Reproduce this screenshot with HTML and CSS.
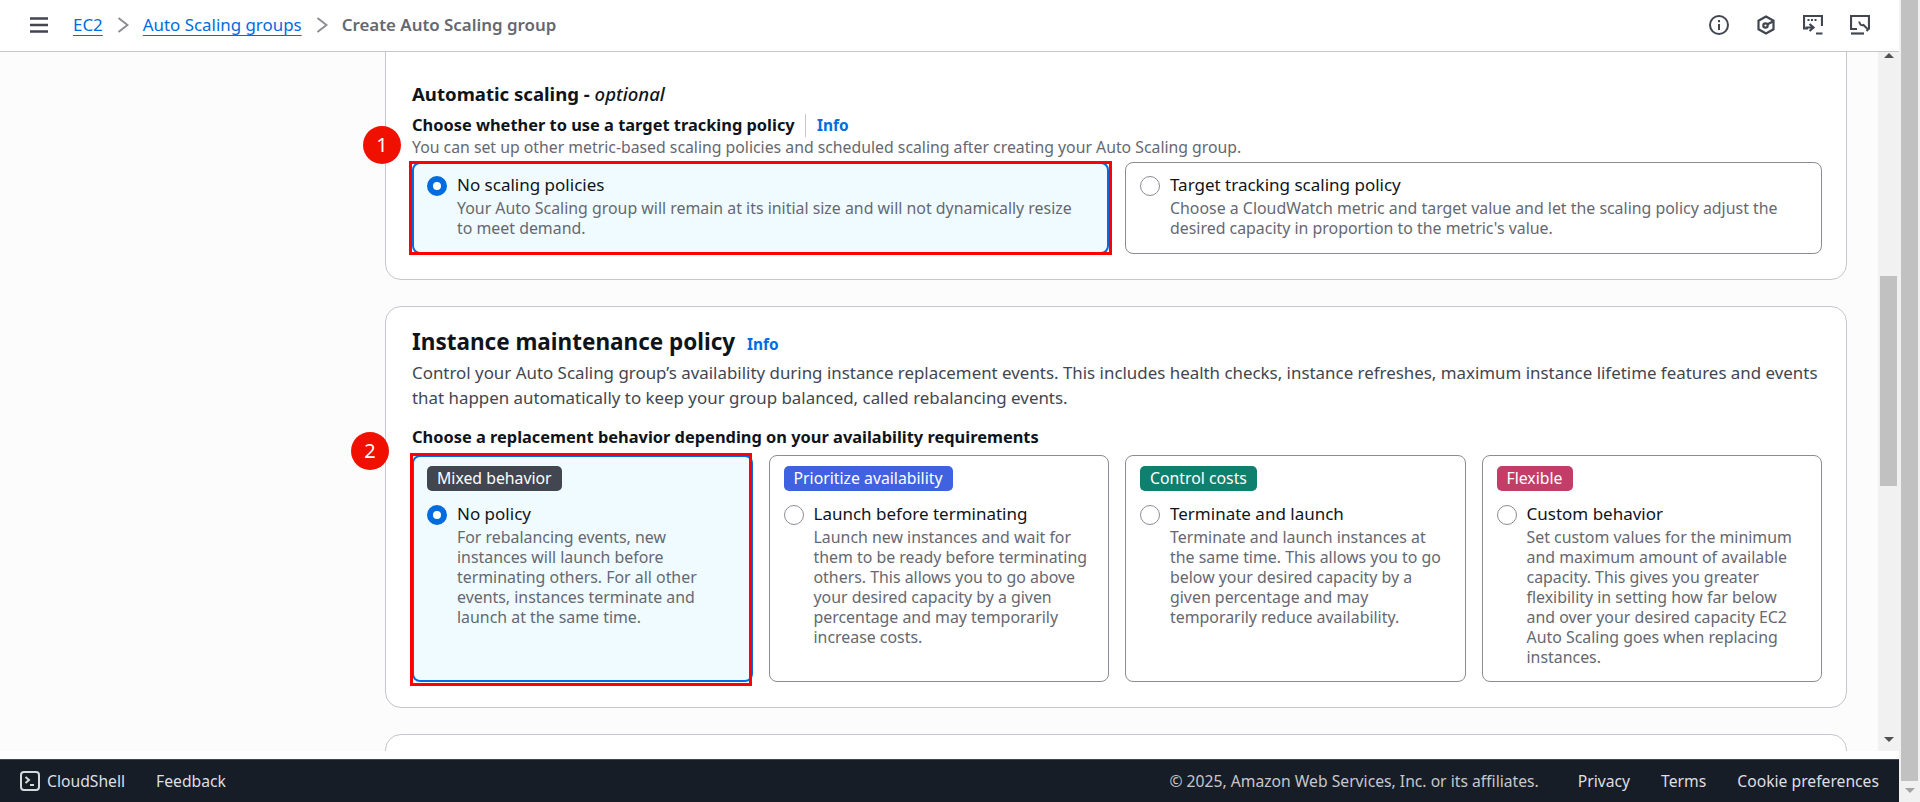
FILE: index.html
```html
<!DOCTYPE html>
<html lang="en">
<head>
  <meta charset="UTF-8">
  <title>Create Auto Scaling group</title>
  <link rel="stylesheet" href="styles.css">
</head>
<body>
  <div id="app">
    <header class="topbar">
      <svg class="menu-icon" width="20" height="20" viewBox="0 0 20 20"><path d="M1 3.500h18M1 10h18M1 16.500h18" stroke="#424650" stroke-width="2.400" fill="none"/></svg>
      <nav class="crumbs">
        <a href="#">EC2</a>
        <svg width="12" height="16" viewBox="0 0 12 16"><path d="M1.500 1l9 7-9 7" stroke="#8c8c94" stroke-width="2" fill="none"/></svg>
        <a href="#">Auto Scaling groups</a>
        <svg width="12" height="16" viewBox="0 0 12 16"><path d="M1.500 1l9 7-9 7" stroke="#8c8c94" stroke-width="2" fill="none"/></svg>
        <span>Create Auto Scaling group</span>
      </nav>
      <div class="tools">
        <svg width="20" height="20" viewBox="0 0 20 20" fill="none" stroke="#424650" stroke-width="2"><circle cx="10" cy="10" r="9"/><path d="M10 9v6M10 5v2.200"/></svg>
        <svg width="20" height="20" viewBox="0 0 20 20" fill="none" stroke="#424650" stroke-width="2.200"><path d="M10 1.500l7.500 4.200v8.600L10 18.500l-7.500-4.200V5.700z"/><circle cx="9.500" cy="10.500" r="2.200"/><path d="M11 9.500l6-3"/></svg>
        <svg width="20" height="20" viewBox="0 0 20 20" fill="none" stroke="#424650" stroke-width="2.200"><path d="M5 13.500H1V1h18v10"/><path d="M4.500 5h2M8 5h2M11.500 5h2" stroke-width="1.800"/><path d="M6.500 9l4 3.500-4 3.500M2.500 12.500h7M13 18.500h6.500"/></svg>
        <svg width="20" height="20" viewBox="0 0 20 20" fill="none" stroke="#424650" stroke-width="2.200"><path d="M7 14H1V1h18v13.500"/><path d="M1 18.500h13"/><path d="M9.500 6.500a3 3 0 0 0 4 3.500l4.500 4.500-1.500 1.500" stroke-width="2"/></svg>
      </div>
    </header>

    <div class="body-row">
      <main class="scroller">
        <section class="card card-first">
          <h3 class="sub-title">Automatic scaling - <em>optional</em></h3>
          <div class="field-label">Choose whether to use a target tracking policy <a class="info info-pipe" href="#">Info</a></div>
          <p class="hint">You can set up other metric-based scaling policies and scheduled scaling after creating your Auto Scaling group.</p>
          <div class="tiles tiles-2">
            <label class="tile selected">
              <span class="mark mark-1"></span>
              <div class="tile-row">
                <span class="radio on"></span>
                <div>
                  <div class="tile-name">No scaling policies</div>
                  <div class="tile-desc">Your Auto Scaling group will remain at its initial size and will not dynamically resize to meet demand.</div>
                </div>
              </div>
            </label>
            <label class="tile">
              <div class="tile-row">
                <span class="radio"></span>
                <div>
                  <div class="tile-name">Target tracking scaling policy</div>
                  <div class="tile-desc">Choose a CloudWatch metric and target value and let the scaling policy adjust the desired capacity in proportion to the metric's value.</div>
                </div>
              </div>
            </label>
          </div>
        </section>

        <section class="card">
          <h2 class="card-title">Instance maintenance policy <a class="info" href="#">Info</a></h2>
          <p class="card-desc">Control your Auto Scaling group’s availability during instance replacement events. This includes health checks, instance refreshes, maximum instance lifetime features and events that happen automatically to keep your group balanced, called rebalancing events.</p>
          <div class="field-label field-gap">Choose a replacement behavior depending on your availability requirements</div>
          <div class="tiles tiles-4">
            <label class="tile selected">
              <span class="mark mark-2"></span>
              <span class="badge badge-grey">Mixed behavior</span>
              <div class="tile-row">
                <span class="radio on"></span>
                <div>
                  <div class="tile-name">No policy</div>
                  <div class="tile-desc">For rebalancing events, new instances will launch before terminating others. For all other events, instances terminate and launch at the same time.</div>
                </div>
              </div>
            </label>
            <label class="tile">
              <span class="badge badge-blue">Prioritize availability</span>
              <div class="tile-row">
                <span class="radio"></span>
                <div>
                  <div class="tile-name">Launch before terminating</div>
                  <div class="tile-desc">Launch new instances and wait for them to be ready before terminating others. This allows you to go above your desired capacity by a given percentage and may temporarily increase costs.</div>
                </div>
              </div>
            </label>
            <label class="tile">
              <span class="badge badge-green">Control costs</span>
              <div class="tile-row">
                <span class="radio"></span>
                <div>
                  <div class="tile-name">Terminate and launch</div>
                  <div class="tile-desc">Terminate and launch instances at the same time. This allows you to go below your desired capacity by a given percentage and may temporarily reduce availability.</div>
                </div>
              </div>
            </label>
            <label class="tile">
              <span class="badge badge-pink">Flexible</span>
              <div class="tile-row">
                <span class="radio"></span>
                <div>
                  <div class="tile-name">Custom behavior</div>
                  <div class="tile-desc">Set custom values for the minimum and maximum amount of available capacity. This gives you greater flexibility in setting how far below and over your desired capacity EC2 Auto Scaling goes when replacing instances.</div>
                </div>
              </div>
            </label>
          </div>
        </section>

        <section class="card card-next"></section>
      </main>
      <div class="inner-scroll">
        <span class="arrow-up"></span>
        <div class="inner-thumb"></div>
        <span class="arrow-down"></span>
      </div>
    </div>

    <footer class="footer">
      <div class="foot-left">
        <svg width="20" height="20" viewBox="0 0 20 20" fill="none" stroke="#d5dbdb" stroke-width="2"><rect x="1" y="1" width="18" height="18" rx="3"/><path d="M5.500 6l3.500 3-3.500 3M10 14h4"/></svg>
        <span class="foot-shell">CloudShell</span>
        <span>Feedback</span>
      </div>
      <div class="foot-right">
        <span class="copy">© 2025, Amazon Web Services, Inc. or its affiliates.</span>
        <span>Privacy</span>
        <span>Terms</span>
        <span>Cookie preferences</span>
      </div>
    </footer>
  </div>
  <div class="outer-scroll">
    <div class="outer-thumb"></div>
    <span class="arrow-down"></span>
  </div>
</body>
</html>
```

FILE: styles.css
```css
* {
  box-sizing: border-box;
}
html, body {
  margin: 0;
  height: 802px;
  overflow: hidden;
}
body {
  display: flex;
  font-family: "Noto Sans", sans-serif;
  color: #0f141a;
  background: #fff;
}
#app {
  width: 1899px;
  height: 802px;
  display: flex;
  flex-direction: column;
}
a {
  color: #006ce0;
}

/* top bar */
.topbar {
  height: 52px;
  flex: none;
  display: flex;
  align-items: center;
  padding: 0 29px 2px 29px;
  border-bottom: 1px solid #c6c6cd;
  background: #fff;
}
.crumbs {
  display: flex;
  align-items: center;
  margin-left: 24px;
  font-size: 16.900px;
  gap: 14px;
}
.crumbs a {
  text-underline-offset: 4px;
  text-decoration-thickness: 1px;
}
.crumbs span {
  color: #656871;
  font-weight: 600;
}
.tools {
  margin-left: auto;
  display: flex;
  gap: 27px;
}

/* content */
.body-row {
  flex: none;
  height: 699px;
  display: flex;
}
.scroller {
  flex: 1;
  overflow: hidden;
  background: #fcfcfd;
  padding: 0 31px 0 385px;
}
.card {
  background: #fff;
  border: 1px solid #c6c6cd;
  border-radius: 16px;
  padding: 20px 24px 25px 26px;
  margin-bottom: 26px;
}
.card-first {
  margin-top: -20px;
  padding-top: 48px;
}
.card-next {
  height: 100px;
}
.sub-title {
  margin: 0 0 6px;
  font-size: 18.600px;
  line-height: 26px;
  font-weight: 700;
}
.sub-title em {
  font-weight: 500;
}
.card-title {
  margin: 0;
  font-size: 22.500px;
  line-height: 30px;
  font-weight: 700;
}
.info {
  color: #006ce0;
  font-size: 15.400px;
  line-height: 1;
  font-weight: 700;
  text-decoration: none;
  margin-left: 6px;
}
.info-pipe {
  border-left: 1px solid #c6c6cd;
  padding: 1px 0 1px 11px;
}
.field-label {
  font-size: 16.400px;
  font-weight: 700;
  line-height: 24px;
}
.field-gap {
  margin-top: 15px;
}
.hint {
  margin: 0;
  font-size: 15.800px;
  line-height: 20px;
  color: #656871;
}
.card-desc {
  margin: 3px 0 0;
  font-size: 16.900px;
  line-height: 25px;
  color: #424650;
}
.tiles {
  display: grid;
  gap: 16px;
  margin-top: 5px;
}
.tiles-2 {
  grid-template-columns: 1fr 1fr;
}
.tiles-4 {
  grid-template-columns: repeat(4, 1fr);
  margin-top: 6px;
}
.tile {
  position: relative;
  display: block;
  border: 1px solid #8c8c94;
  border-radius: 8px;
  padding: 10px 20px 14px 14px;
  background: #fff;
}
.tile.selected {
  border: 2px solid #006ce0;
  background: #f0fbff;
  padding: 9px 19px 13px 13px;
}
.tiles-2 .tile {
  padding-bottom: 15px;
}
.tiles-2 .tile.selected {
  padding-bottom: 14px;
}
.tile-row {
  display: flex;
  gap: 10px;
}
.tile-name {
  font-size: 17px;
  line-height: 24px;
  color: #0f141a;
}
.tile-desc {
  margin-top: 1px;
  font-size: 15.900px;
  line-height: 20px;
  color: #656871;
}
.radio {
  flex: none;
  width: 20px;
  height: 20px;
  margin-top: 3px;
  border-radius: 50%;
  border: 1.500px solid #8c8c94;
  background: #fff;
}
.radio.on {
  border: 6px solid #006ce0;
}
.badge {
  display: inline-block;
  height: 25px;
  line-height: 24px;
  padding: 0 10px;
  border-radius: 5px;
  font-size: 15.800px;
  color: #fff;
  margin-bottom: 11px;
  vertical-align: top;
}
.badge-grey { background: #424650; }
.badge-blue { background: #3f62e0; }
.badge-green { background: #0f7f6e; }
.badge-pink { background: #c33d69; }

/* red annotation box and number bubble */
.mark {
  position: absolute;
  border: 3px solid #f00;
}
.mark::before {
  position: absolute;
  width: 38px;
  height: 38px;
  border-radius: 50%;
  background: #f01000;
  color: #fff;
  font-size: 20px;
  line-height: 38px;
  text-align: center;
}
.mark-1 {
  left: -5px;
  right: -4.500px;
  top: -3px;
  bottom: -3px;
}
.mark-1::before {
  content: "1";
  left: -49px;
  top: -38px;
}
.mark-2 {
  left: -4px;
  right: -1.500px;
  top: -4px;
  bottom: -6px;
}
.mark-2::before {
  content: "2";
  left: -62px;
  top: -24px;
}

/* scrollbars */
.inner-scroll {
  position: relative;
  flex: none;
  width: 21px;
  background: #f1f1f1;
}
.inner-thumb {
  position: absolute;
  left: 2px;
  right: 2px;
  top: 224px;
  height: 210px;
  background: #c1c1c1;
}
.outer-scroll {
  position: relative;
  width: 21px;
  height: 802px;
  background: #f1f1f1;
}
.outer-thumb {
  position: absolute;
  left: 2px;
  right: 2px;
  top: 0;
  height: 781px;
  background: #c1c1c1;
}
.arrow-up, .arrow-down {
  position: absolute;
  left: 50%;
  margin-left: -5px;
  border-left: 5px solid transparent;
  border-right: 5px solid transparent;
}
.arrow-up {
  top: 1px;
  border-bottom: 5px solid #505050;
}
.arrow-down {
  bottom: 9px;
  border-top: 5px solid #505050;
}
.outer-scroll .arrow-down {
  border-top-color: #a3a3a3;
}

/* footer */
.footer {
  margin-top: 8px;
  flex: 1;
  background: #161d26;
  border-top: 1px solid #424650;
  display: flex;
  align-items: center;
  justify-content: space-between;
  padding: 0 20px 1px;
  color: #dedee3;
  font-size: 15.700px;
}
.foot-left, .foot-right {
  display: flex;
  align-items: center;
}
.foot-shell {
  margin-left: 7px;
  margin-right: 31px;
}
.foot-right {
  gap: 31px;
}
.copy {
  margin-right: 8px;
  color: #c6c6cd;
}
```
